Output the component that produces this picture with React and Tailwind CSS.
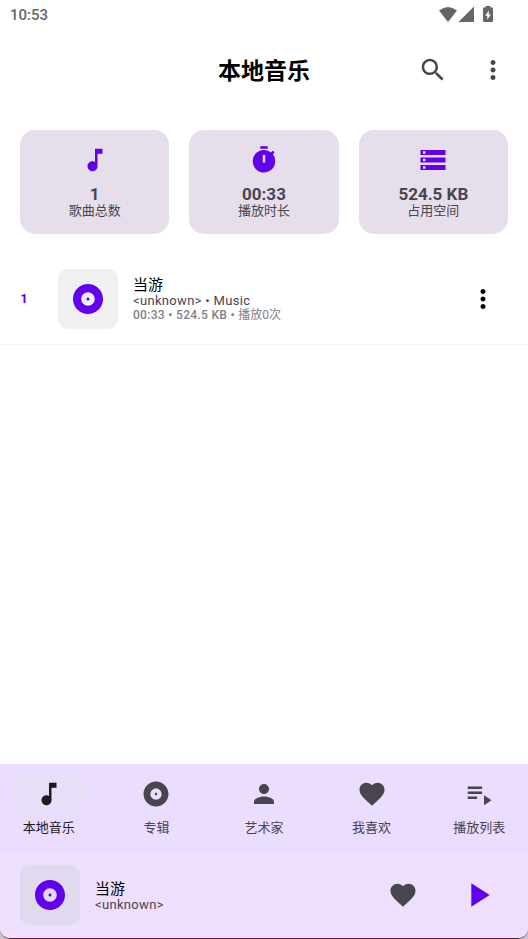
const MORE = "M12 8c1.1 0 2-.9 2-2s-.9-2-2-2-2 .9-2 2 .9 2 2 2zm0 2c-1.1 0-2 .9-2 2s.9 2 2 2 2-.9 2-2-.9-2-2-2zm0 6c-1.1 0-2 .9-2 2s.9 2 2 2 2-.9 2-2-.9-2-2-2z";
const SEARCH = "M15.5 14h-.79l-.28-.27C15.41 12.59 16 11.11 16 9.5 16 5.91 13.09 3 9.5 3S3 5.91 3 9.5 5.91 16 9.5 16c1.61 0 3.09-.59 4.23-1.57l.27.28v.79l5 4.99L20.49 19l-4.99-5zm-6 0C7.01 14 5 11.99 5 9.5S7.01 5 9.5 5 14 7.01 14 9.5 11.99 14 9.5 14z";
const NOTE = "M12 3v10.55c-.59-.34-1.27-.55-2-.55-2.21 0-4 1.79-4 4s1.79 4 4 4 4-1.79 4-4V7h4V3h-6z";
const TIMER = "M9 1h6v2H9V1zm10.03 6.39l1.42-1.42c-.43-.51-.9-.99-1.41-1.41l-1.42 1.42C16.07 4.74 14.12 4 12 4c-4.97 0-9 4.03-9 9s4.02 9 9 9 9-4.03 9-9c0-2.12-.74-4.07-1.97-5.61zM13 14h-2V8h2v6z";
const STORAGE = "M2 20h20v-4H2v4zm2-3h2v2H4v-2zM2 4v4h20V4H2zm4 3H4V5h2v2zm-4 7h20v-4H2v4zm2-3h2v2H4v-2z";
const ALBUM = "M12 2C6.48 2 2 6.48 2 12s4.48 10 10 10 10-4.48 10-10S17.52 2 12 2zm0 14.5c-2.49 0-4.5-2.01-4.5-4.5S9.51 7.5 12 7.5s4.5 2.01 4.5 4.5-2.01 4.5-4.5 4.5zm0-5.5c-.55 0-1 .45-1 1s.45 1 1 1 1-.45 1-1-.45-1-1-1z";
const PERSON = "M12 12c2.21 0 4-1.79 4-4s-1.79-4-4-4-4 1.79-4 4 1.79 4 4 4zm0 2c-2.67 0-8 1.34-8 4v2h16v-2c0-2.66-5.33-4-8-4z";
const HEART = "M12 21.35l-1.45-1.32C5.4 15.36 2 12.28 2 8.5 2 5.42 4.42 3 7.5 3c1.74 0 3.41.81 4.5 2.09C13.09 3.81 14.76 3 16.5 3 19.58 3 22 5.42 22 8.5c0 3.78-3.4 6.86-8.55 11.54L12 21.35z";
const PLAYLIST = "M3 6h11.5v2H3zM3 10h11.5v2H3zM3 14h7.500v2H3zM16 13v8l6-4z";
const PLAY = "M8 5v14l11-7z";

function Icon({ d, className = "size-[30px]" }) {
  return (
    <svg viewBox="0 0 24 24" fill="currentColor" aria-hidden="true" className={"shrink-0 " + className}>
      <path d={d} fillRule="evenodd" />
    </svg>
  );
}

function StatusBar() {
  return (
    <div className="flex h-[30px] items-center justify-between pl-[10px] pr-[30px] text-[#666]">
      <span className="pt-px text-[15px] font-medium">10:53</span>
      <div className="flex items-center">
        <svg viewBox="0 0 20 20" className="size-5" fill="currentColor" aria-hidden="true">
          <path d="M1 5.500Q10-1.500 19 5.500L10 17Z" />
        </svg>
        <svg viewBox="0 0 20 20" className="size-5" fill="currentColor" aria-hidden="true">
          <path d="M16 1.500V17H.5Z" />
        </svg>
        <svg viewBox="0 0 20 20" className="size-5" fill="currentColor" aria-hidden="true">
          <path fillRule="evenodd" d="M7.500 1h5v1.500H14q1 0 1 1V16q0 1-1 1H6q-1 0-1-1V3.500q0-1 1-1h1.500ZM10.800 5.500L7.300 10.700h2v4l3.500-5.200h-2Z" />
        </svg>
      </div>
    </div>
  );
}

const stats = [
  { icon: NOTE, value: "1", label: "歌曲总数" },
  { icon: TIMER, value: "00:33", label: "播放时长" },
  { icon: STORAGE, value: "524.5 KB", label: "占用空间" },
];

const tabs = [
  { icon: NOTE, label: "本地音乐", active: true },
  { icon: ALBUM, label: "专辑" },
  { icon: PERSON, label: "艺术家" },
  { icon: HEART, label: "我喜欢" },
  { icon: PLAYLIST, label: "播放列表" },
];

export default function App() {
  return (
    <div className="min-h-screen bg-[#c4c4c4] font-[Roboto,'Noto_Sans_CJK_SC',sans-serif]">
      <div className="flex min-h-screen flex-col overflow-hidden rounded-b-[10px] border-b border-[#5b1c36] bg-white">
        <StatusBar />
        <header className="grid h-20 grid-cols-[1fr_auto_1fr] items-center">
          <h1 className="col-start-2 pt-1 text-[23px] font-bold text-black">本地音乐</h1>
          <div className="flex justify-end gap-[30px] pr-5 text-[#49454f]">
            <button type="button" aria-label="搜索"><Icon d={SEARCH} /></button>
            <button type="button" aria-label="更多"><Icon d={MORE} /></button>
          </div>
        </header>

        <main className="flex-1">
          <section className="grid grid-cols-3 gap-5 px-5 pt-5">
            {stats.map((s) => (
              <div key={s.label} className="flex h-[104px] flex-col items-center rounded-[15px] bg-[#e6dfeb] pt-[15px] text-[#49454f]">
                <Icon d={s.icon} className="size-[30px] text-[#6200ee]" />
                <strong className="mt-[9px] text-[17px] leading-5 font-bold">{s.value}</strong>
                <span className="text-[13px] leading-[14px]">{s.label}</span>
              </div>
            ))}
          </section>

          <ul className="pt-5">
            <li className="flex h-[91px] items-center border-b border-[#f5f5f5] pr-[30px]">
              <span className="w-12 text-center text-[13px] font-bold text-[#6200ee]">1</span>
              <div className="ml-[10px] flex size-[60px] items-center justify-center rounded-[10px] bg-[#f0f0f0]">
                <Icon d={ALBUM} className="size-9 text-[#6200ee]" />
              </div>
              <div className="ml-[15px] flex-1">
                <p className="text-[15px] leading-[18px] text-black">当游</p>
                <p className="text-[13px] leading-[14px] tracking-wide text-[#49454f]">&lt;unknown&gt; • Music</p>
                <p className="text-[12px] leading-[14px] font-medium text-[#828085]">
                  <span className="tracking-wide">00:33 • 524.5 KB • </span>
                  <span className="font-normal">播放0次</span>
                </p>
              </div>
              <button type="button" aria-label="歌曲选项" className="text-black"><Icon d={MORE} /></button>
            </li>
          </ul>
        </main>

        <nav className="grid h-[88px] grid-cols-5 gap-[10px] border-b border-[#e8dafa] bg-[#eaddff]">
          {tabs.map((t) => (
            <button
              key={t.label}
              type="button"
              className={"flex flex-col items-center pt-[10px] " + (t.active ? "text-[#1d1b20]" : "text-[#49454f]")}
            >
              <span className={"flex h-10 w-20 items-center justify-center rounded-full " + (t.active ? "bg-[#e8def8]" : "")}>
                <Icon d={t.icon} />
              </span>
              <span className="mt-[5px] text-[13px] leading-[18px]">{t.label}</span>
            </button>
          ))}
        </nav>

        <footer className="flex h-[86px] items-center bg-[#eddffd] pl-5 pr-[30px]">
          <div className="flex size-[60px] items-center justify-center rounded-[10px] bg-[#e1daee]">
            <Icon d={ALBUM} className="size-9 text-[#6200ee]" />
          </div>
          <div className="ml-[15px] flex-1 pt-[2px]">
            <p className="text-[15px] leading-[18px] text-black">当游</p>
            <p className="text-[13px] leading-[14px] tracking-wide text-[#49454f]">&lt;unknown&gt;</p>
          </div>
          <button type="button" aria-label="喜欢" className="mr-10 text-[#49454f]"><Icon d={HEART} /></button>
          <button type="button" aria-label="播放" className="text-[#6200ee]"><Icon d={PLAY} className="size-10" /></button>
        </footer>
      </div>
    </div>
  );
}
